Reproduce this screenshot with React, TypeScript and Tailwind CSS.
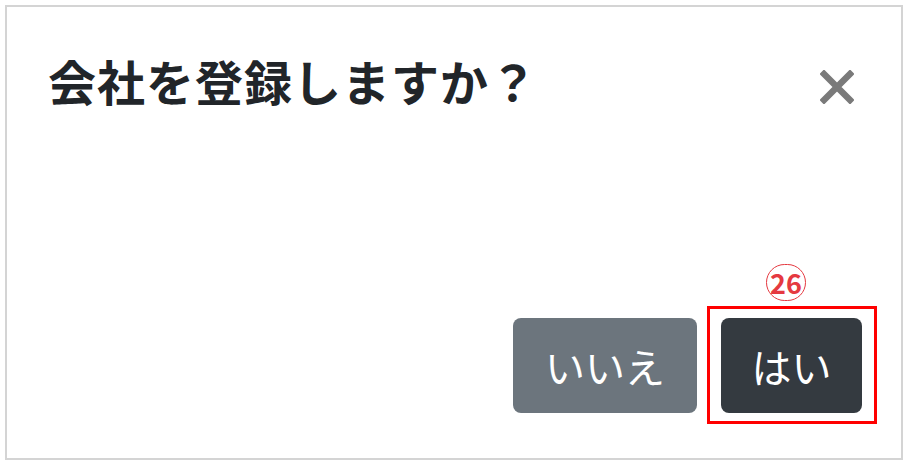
import React from "react";

export default function App() {
  const font = { fontFamily: '"Noto Sans CJK JP", "Noto Sans", sans-serif' };
  return (
    <div className="w-[908px] h-[464px] bg-white p-[5px]" style={font}>
      <div className="w-[898px] h-[455px] border-2 border-[#d4d4d4] flex flex-col">
        <div className="flex items-center justify-between pl-[41px] pr-[47px] pt-[43px]">
          <h1 className="text-[48px] font-bold text-[#212529] leading-[60px] tracking-[1px]">会社を登録しますか？</h1>
          <svg width="34" height="34" viewBox="0 0 34 34" className="mt-[14px]">
            <path d="M4 4 L30 30 M30 4 L4 30" stroke="#7a7a7a" strokeWidth="6.5" strokeLinecap="square" />
          </svg>
        </div>
        <div className="flex-1" />
        <div className="flex justify-end items-end pr-[24px] pb-[34px] gap-[10px]">
          <button className="w-[184px] h-[95px] rounded-[8px] bg-[#6c757d] text-white text-[40px] leading-none mb-[11px]">いいえ</button>
          <div className="relative border-[3px] border-[#ff0000] pt-[9px] pb-[8px] pl-[11px] pr-[12px]">
            <div className="absolute -top-[45px] left-[56px] w-[40px] h-[37px] rounded-full border border-[#e53940] flex items-center justify-center text-[#e53940] text-[27px] font-bold leading-none">26</div>
            <button className="w-[141px] h-[95px] rounded-[8px] bg-[#343a40] text-white text-[40px] leading-none">はい</button>
          </div>
        </div>
      </div>
    </div>
  );
}
